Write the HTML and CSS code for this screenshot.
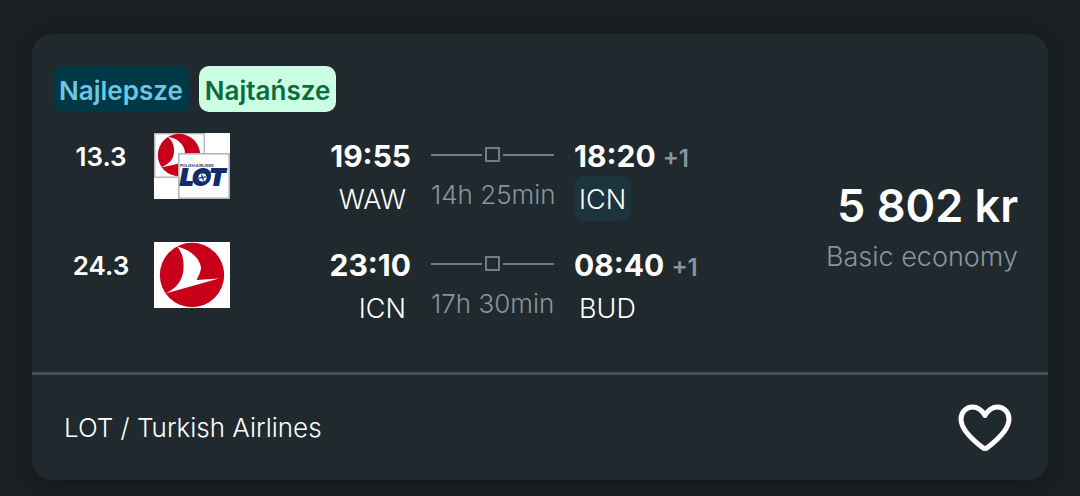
FILE: index.html
```html
<!DOCTYPE html>
<html lang="pl">
<head>
<meta charset="utf-8">
<meta name="viewport" content="width=device-width, initial-scale=1">
<title>LOT / Turkish Airlines</title>
<link rel="stylesheet" href="styles.css">
</head>
<body>
<article class="card">
  <div class="body">
    <div class="badges">
      <span class="badge best">Najlepsze</span>
      <span class="badge cheapest">Najtańsze</span>
    </div>
    <div class="main">
      <div class="legs">
        <section class="leg">
          <div class="date">13.3</div>
          <svg class="logo" viewBox="0 0 76 66" role="img" aria-label="Turkish Airlines, LOT">
            <rect width="76" height="66" fill="#fff"/>
            <rect x=".7" y=".7" width="49.500" height="43.500" fill="#fff" stroke="#aeb7bd" stroke-width="1.4"/>
            <circle cx="25" cy="22" r="21.200" fill="#c90019"/>
            <path d="M14 4C25 5 32 14 31 22Q30 25 27 28L41 27L7 34.500C17 30 20 25 20 18C20 11 18 8 14 4Z" fill="#fff"/>
            <rect x="24.800" y="20.800" width="50.400" height="44.400" fill="#fff" stroke="#aeb7bd" stroke-width="1.600"/>
            <text class="logo-small" x="26" y="34">POLISH AIRLINES</text>
            <text class="logo-lot" x="26" y="52">LOT</text>
            <ellipse cx="48.500" cy="44.500" rx="8" ry="7" fill="#132c6b"/>
            <circle cx="48.500" cy="44.500" r="4" fill="#fff"/>
            <path d="M45 45.200L52 43.800M47.500 41.500L49.500 47.500" stroke="#132c6b" stroke-width="1.200"/>
          </svg>
          <div class="stop depart">
            <div class="time">19:55</div>
            <div class="code">WAW</div>
          </div>
          <div class="route">
            <div class="track"><i class="line"></i><i class="node"></i><i class="line"></i></div>
            <div class="duration">14h 25min</div>
          </div>
          <div class="stop">
            <div class="time">18:20 <span class="plus">+1</span></div>
            <div class="code marked">ICN</div>
          </div>
        </section>
        <section class="leg">
          <div class="date">24.3</div>
          <svg class="logo" viewBox="0 0 76 66" role="img" aria-label="Turkish Airlines">
            <rect width="76" height="66" fill="#fff"/>
            <circle cx="38" cy="33" r="32.200" fill="#c90019"/>
            <path d="M23 4.500C38 8 47 18 47 27Q46 32 42.500 38L65 36.500L11.500 51.500C22 47 29 38 29.500 27C30 17 28 10 23 4.500Z" fill="#fff"/>
          </svg>
          <div class="stop depart">
            <div class="time">23:10</div>
            <div class="code">ICN</div>
          </div>
          <div class="route">
            <div class="track"><i class="line"></i><i class="node"></i><i class="line"></i></div>
            <div class="duration">17h 30min</div>
          </div>
          <div class="stop">
            <div class="time">08:40 <span class="plus">+1</span></div>
            <div class="code">BUD</div>
          </div>
        </section>
      </div>
      <div class="offer">
        <div class="price">5 802 kr</div>
        <div class="fare">Basic economy</div>
      </div>
    </div>
  </div>
  <footer class="footer">
    <span class="carriers">LOT / Turkish Airlines</span>
    <button class="save" type="button" aria-label="Zapisz">
      <svg class="heart" viewBox="0 0 54 48" aria-hidden="true">
        <path d="M27 11.500C23.500 5.500 19.500 3 14.500 3C8 3 3 8.500 3 15C3 24 12 34 24.500 43.500Q27 45.500 29.500 43.500C42 34 51 24 51 15C51 8.500 46 3 39.500 3C34.500 3 30.500 5.500 27 11.500Z" fill="none" stroke="#fff" stroke-width="5" stroke-linejoin="round"/>
      </svg>
    </button>
  </footer>
</article>
</body>
</html>
```
FILE: styles.css
```css
* {
  box-sizing: border-box;
}

body {
  margin: 0;
  padding: 34px 32px 16px;
  background: #1a2022;
  color: #fff;
  font-family: Inter, "Liberation Sans", sans-serif;
  font-size: 27px;
  font-weight: 300;
}

.card {
  background: #20292d;
  border-radius: 20px;
  box-shadow: 0 2px 16px rgba(0, 0, 0, 0.3);
}

.body {
  padding: 32px 30px 42px 21px;
  border-bottom: 3px solid #465158;
}

.badges {
  display: flex;
  gap: 10px;
  margin-bottom: 21px;
}

.badge {
  padding: 3px 6px 0;
  border-radius: 10px;
  font-size: 26px;
  font-weight: 600;
  line-height: 43px;
}

.best {
  background: #013846;
  color: #6bc7e4;
}

.cheapest {
  background: #cbffe4;
  color: #0d6b3a;
}

.main {
  display: flex;
  justify-content: space-between;
  align-items: center;
}

.legs {
  display: grid;
  gap: 21px;
}

.leg {
  display: grid;
  grid-template-columns: 81px 76px 161px 123px auto;
  column-gap: 20px;
  align-items: start;
}

.date {
  padding-left: 15px;
  font-size: 26px;
  font-weight: 600;
  line-height: 48px;
  text-align: center;
  white-space: nowrap;
}

.logo {
  display: block;
  width: 76px;
  height: 66px;
}

.logo-small {
  font-size: 4px;
  font-style: italic;
  font-weight: 600;
  fill: #132c6b;
}

.logo-lot {
  font-family: "DejaVu Sans", sans-serif;
  font-size: 21px;
  font-style: italic;
  font-weight: 700;
  fill: #132c6b;
  stroke: #132c6b;
  stroke-width: 2px;
}

.depart {
  text-align: right;
}

.time {
  padding-top: 3px;
  height: 43px;
  font-size: 30px;
  font-weight: 700;
  line-height: 41px;
  white-space: nowrap;
}

.plus {
  color: #8795a0;
  font-size: 24px;
  font-weight: 600;
}

.code {
  padding: 2px 5px 0;
  line-height: 43px;
}

.marked {
  width: fit-content;
  border-radius: 10px;
  background: #1c343e;
}

.track {
  display: flex;
  align-items: center;
  gap: 3px;
  height: 43px;
}

.line {
  flex: 1;
  height: 2px;
  background: #6e7e89;
}

.node {
  width: 15px;
  height: 15px;
  border: 2px solid #6e7e89;
}

.duration {
  color: #8795a0;
  font-size: 26px;
  line-height: 38px;
  text-align: center;
  white-space: nowrap;
}

.offer {
  padding-bottom: 6px;
  text-align: right;
}

.price {
  font-size: 45px;
  font-weight: 600;
  line-height: 56px;
}

.fare {
  color: #8795a0;
  line-height: 46px;
}

.footer {
  display: flex;
  justify-content: space-between;
  align-items: center;
  min-height: 105px;
  padding: 0 36px 0 32px;
}

.carriers {
  font-size: 26px;
}

.save {
  display: flex;
  padding: 0;
  border: 0;
  background: none;
  cursor: pointer;
}

.heart {
  width: 54px;
  height: 48px;
}
```
